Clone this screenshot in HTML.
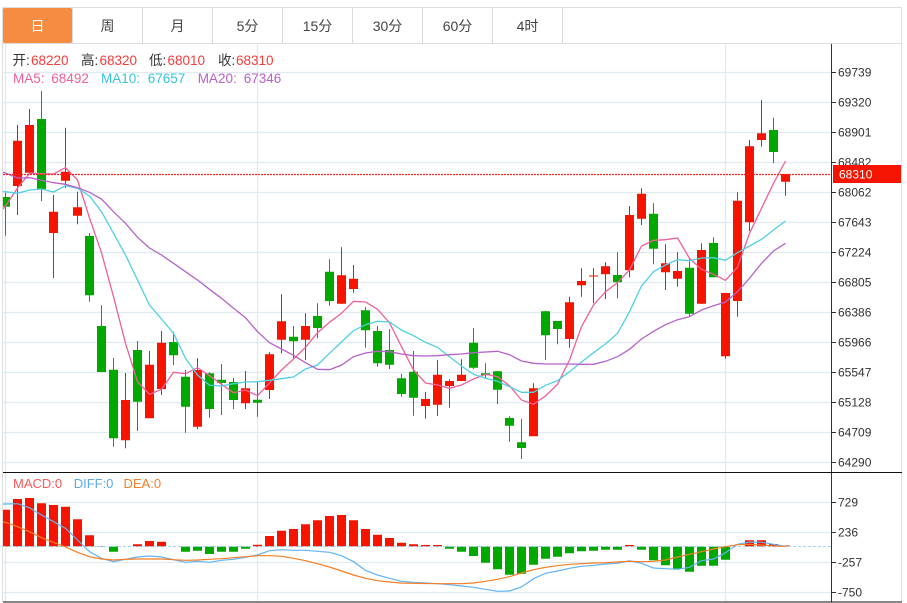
<!DOCTYPE html>
<html lang="zh">
<head>
<meta charset="utf-8">
<title>K线图</title>
<style>
html,body{margin:0;padding:0;background:#fff;width:907px;height:603px;overflow:hidden}
svg{display:block}
text{font-family:"Liberation Sans","Noto Sans CJK SC",sans-serif}
.tab{font-size:14px;fill:#444;text-anchor:middle}
.ax{font-size:12px;fill:#333}
.info{font-size:13.5px}
.m{font-size:13px}
</style>
</head>
<body>
<svg width="907" height="603" viewBox="0 0 907 603" xmlns="http://www.w3.org/2000/svg">
<defs><clipPath id="c"><rect x="3" y="44" width="828" height="558"/></clipPath></defs>
<rect width="907" height="603" fill="#fff"/>

<!-- tabs -->
<path d="M2.5 7.5H901.5V602M2.5 7.5V602M3 43.5H901" fill="none" stroke="#dedede"/>
<path d="M72.5 8V43M142.5 8V43M212.5 8V43M282.5 8V43M352.5 8V43M422.5 8V43M492.5 8V43M562.5 8V43" fill="none" stroke="#dadada"/>
<rect x="3" y="8" width="69" height="35" rx="1.5" fill="#f58c42"/>
<text class="tab" x="37.5" y="31" style="fill:#fff">日</text>
<text class="tab" x="107.5" y="31">周</text>
<text class="tab" x="177.5" y="31">月</text>
<text class="tab" x="247.5" y="31">5分</text>
<text class="tab" x="317.5" y="31">15分</text>
<text class="tab" x="387.5" y="31">30分</text>
<text class="tab" x="457.5" y="31">60分</text>
<text class="tab" x="527.5" y="31">4时</text>

<!-- grid -->
<path d="M3 72.5H831M3 102.5H831M3 132.5H831M3 162.5H831M3 192.5H831M3 222.5H831M3 252.5H831M3 282.5H831M3 312.5H831M3 342.5H831M3 372.5H831M3 402.5H831M3 432.5H831M3 462.5H831M3 502.5H831M3 532.5H831M3 562.5H831M3 592.5H831M5.5 44V602M257.5 44V602M725.5 44V602" fill="none" stroke="#dfeaf1" stroke-width="1.3"/>

<g clip-path="url(#c)">
<!-- wicks -->
<path fill="none" stroke="#f41400" d="M17.5 125V215M29.5 109V173M53.5 195V278M65.5 127.7V188M77.5 191.7V224.3M125.5 373V448.3M149.5 351V418M161.5 331V395M197.5 358.3V429M245.5 371V409M269.5 352.3V399M281.5 294.3V353.3M305.5 313.3V360M341.5 247.3V304M353.5 265V292.7M425.5 392V418.7M437.5 360V416M449.5 379.3V407.7M461.5 359.3V381M533.5 383.3V436M569.5 296.7V347.7M581.5 268.3V296.7M593.5 268.3V303.3M605.5 262.3V299M629.5 206V277.3M641.5 188.3V225M665.5 244.3V290M677.5 252.3V286.7M701.5 243.3V304M725.5 293V358.7M737.5 192.3V316.7M749.5 140V231M761.5 100V146.7M785.5 174V195.7"/>
<path fill="none" stroke="#00a800" d="M5.5 192.7V235.7M41.5 91V201M89.5 233V301.7M101.5 305.3V372M113.5 358V446.7M137.5 341V431M173.5 331.7V365M185.5 370V432.7M209.5 372.3V417.7M221.5 364V415M233.5 378V409M257.5 381.7V416.7M293.5 326V358.3M317.5 303.3V338.3M329.5 259.3V305.7M365.5 306.7V347.7M377.5 326V366.7M389.5 329V369M401.5 374V396.7M413.5 351V415.7M473.5 328V369M485.5 363.3V378.3M497.5 371V404M509.5 416.3V441.7M521.5 419V459M545.5 311V360M557.5 321V344.3M617.5 252.3V298.3M653.5 203.3V264.3M689.5 258.3V316.7M713.5 237.3V277.3M773.5 117.7V163.3"/>
<!-- red bodies -->
<path fill="#f41400" d="M13 140.7H22V186H13zM25 125H34V172.7H25zM49 211.7H58V233H49zM61 171.7H70V180.7H61zM73 207.3H82V215.7H73zM121 400H130V440.3H121zM145 364.7H154V418.3H145zM157 342.7H166V389H157zM193 370H202V426.7H193zM241 388.3H250V403.3H241zM265 354.3H274V390H265zM277 321.3H286V339.7H277zM301 326H310V339.7H301zM337 275.3H346V303.7H337zM349 278.7H358V289H349zM421 399H430V406H421zM433 374.7H442V404.7H433zM445 381H454V386H445zM457 374.7H466V381H457zM529 388.3H538V436.3H529zM565 302.3H574V339H565zM577 281H586V285.3H577zM589 275.5H598V276.5H589zM601 266.3H610V274.3H601zM625 215H634V270.3H625zM637 193.7H646V218.7H637zM661 263.3H670V272.3H661zM673 271H682V278.7H673zM697 250H706V303.7H697zM721 293H730V356.3H721zM733 200.7H742V301H733zM745 146.3H754V222.3H745zM757 133.3H766V140H757zM781 174H790V181.7H781z"/>
<!-- green bodies -->
<path fill="#00a800" d="M1 197H10V206.7H1zM37 119H46V189H37zM85 236H94V295.3H85zM97 326H106V372H97zM109 369.7H118V438.3H109zM133 350H142V401.7H133zM169 342H178V355.3H169zM181 376.7H190V406.7H181zM205 373.3H214V409H205zM217 379.7H226V383H217zM229 382H238V400H229zM253 399.7H262V402.7H253zM289 336.7H298V341.3H289zM313 316H322V328H313zM325 271.7H334V301H325zM361 310.3H370V330.3H361zM373 331H382V363.3H373zM385 350H394V364.7H385zM397 378.3H406V394H397zM409 371.7H418V397.7H409zM469 342.7H478V367.7H469zM481 373.3H490V375H481zM493 371.3H502V389.7H493zM505 418H514V425.7H505zM517 442.3H526V448H517zM541 311.3H550V335.3H541zM553 321H562V329H553zM613 275H622V282.3H613zM649 213.7H658V248.7H649zM685 267.7H694V313.7H685zM709 243H718V277.3H709zM769 130H778V152H769z"/>

<!-- MA lines -->
<polyline fill="none" stroke="#f0609a" stroke-width="1.3" points="3,209 5.5,206 17.5,188 29.5,173.3 41.5,173.7 53.5,174 65.5,167.7 77.5,180 89.5,218 101.5,252.7 113.5,296.7 125.5,343.3 137.5,381.7 149.5,394.3 161.5,389.3 173.5,372.3 185.5,373.7 197.5,367.7 209.5,375.7 221.5,384.3 233.5,392.7 245.5,390 257.5,395.7 269.5,383 281.5,370 293.5,359 305.5,347.3 317.5,332.7 329.5,322.3 341.5,313.3 353.5,301.3 365.5,302 377.5,309.3 389.5,322.7 401.5,346.7 413.5,370 425.5,383 437.5,385 449.5,388.3 461.5,385 473.5,379 485.5,374.3 497.5,376.7 509.5,385.7 521.5,400 533.5,404.3 545.5,396 557.5,384.3 569.5,360 581.5,326.7 593.5,305 605.5,291.7 617.5,282.7 629.5,270 641.5,246 653.5,240.3 665.5,239.7 677.5,238 689.5,258.3 701.5,269.3 713.5,274.3 725.5,280.3 737.5,267.3 749.5,233.3 761.5,208.3 773.5,183.3 785.5,161"/>
<polyline fill="none" stroke="#4fd0e4" stroke-width="1.3" points="3,191.5 5.5,191.7 17.5,193.3 29.5,190 41.5,189 53.5,192 65.5,185.7 77.5,188.3 89.5,196 101.5,211.7 113.5,233.3 125.5,255 137.5,280 149.5,305 161.5,319 173.5,333.3 185.5,358.3 197.5,375 209.5,385.3 221.5,386 233.5,383.7 245.5,382 257.5,381.7 269.5,380.3 281.5,378.7 293.5,377 305.5,369 317.5,365 329.5,353.3 341.5,342 353.5,330.7 365.5,324.7 377.5,321.3 389.5,322 401.5,330 413.5,335.7 425.5,342.3 437.5,347.3 449.5,356.7 461.5,366 473.5,374.3 485.5,378.3 497.5,381.3 509.5,386.7 521.5,392.3 533.5,392.3 545.5,385.3 557.5,380.7 569.5,371.7 581.5,362 593.5,352.7 605.5,344 617.5,333.3 629.5,311.7 641.5,286 653.5,271.7 665.5,265 677.5,259.7 689.5,260.7 701.5,258 713.5,257.7 725.5,260.3 737.5,252.7 749.5,246 761.5,239.3 773.5,230 785.5,221"/>
<polyline fill="none" stroke="#b662cb" stroke-width="1.3" points="3,172.3 5.5,173 17.5,178 29.5,177.7 41.5,180.3 53.5,182.7 65.5,184.3 77.5,187.7 89.5,192.3 101.5,199 113.5,211.7 125.5,223.3 137.5,237.3 149.5,248 161.5,255 173.5,263.3 185.5,271.7 197.5,280 209.5,289.3 221.5,298.3 233.5,308.3 245.5,317.7 257.5,331.7 269.5,342.7 281.5,349 293.5,355.3 305.5,362.7 317.5,369.3 329.5,369.7 341.5,365 353.5,356.7 365.5,353 377.5,351.3 389.5,351.7 401.5,354 413.5,355.7 425.5,356 437.5,355.7 449.5,354.7 461.5,354 473.5,352.7 485.5,352 497.5,351.3 509.5,354.7 521.5,361 533.5,363.3 545.5,364 557.5,364 569.5,364 581.5,364.3 593.5,364.3 605.5,361.3 617.5,356.7 629.5,349.3 641.5,339 653.5,331.3 665.5,324.7 677.5,319.7 689.5,316.7 701.5,310 713.5,305.7 725.5,302 737.5,291.7 749.5,278.3 761.5,263.3 773.5,251 785.5,243.3"/>

<!-- MACD bars -->
<path fill="#f41400" d="M1 509.7H10V546.5H1zM13 499H22V546.5H13zM25 498H34V546.5H25zM37 503.3H46V546.5H37zM49 505H58V546.5H49zM61 506.7H70V546.5H61zM73 519.3H82V546.5H73zM85 535.3H94V546.5H85zM133 544.3H142V546.5H133zM145 541H154V546.5H145zM157 541.7H166V546.5H157zM253 544.7H262V546.5H253zM265 536H274V546.5H265zM277 530.7H286V546.5H277zM289 529H298V546.5H289zM301 524.3H310V546.5H301zM313 520.3H322V546.5H313zM325 516H334V546.5H325zM337 515H346V546.5H337zM349 520.3H358V546.5H349zM361 529H370V546.5H361zM373 534.7H382V546.5H373zM385 538H394V546.5H385zM397 542.7H406V546.5H397zM409 544.3H418V546.5H409zM421 545H430V546.5H421zM433 545H442V546.5H433zM625 545H634V546.5H625zM745 540.3H754V546.5H745zM757 540.3H766V546.5H757zM769 544H778V546.5H769zM781 545.5H790V546.5H781z"/>
<path fill="#00a800" d="M97 546.5H106V547H97zM109 546.5H118V551.7H109zM181 546.5H190V551.7H181zM193 546.5H202V550.7H193zM205 546.5H214V554H205zM217 546.5H226V551.7H217zM229 546.5H238V551.7H229zM241 546.5H250V548.7H241zM445 546.5H454V548.7H445zM457 546.5H466V551.7H457zM469 546.5H478V556H469zM481 546.5H490V562.7H481zM493 546.5H502V569.3H493zM505 546.5H514V574.7H505zM517 546.5H526V573.7H517zM529 546.5H538V564.7H529zM541 546.5H550V558.7H541zM553 546.5H562V556.7H553zM565 546.5H574V553.3H565zM577 546.5H586V551.3H577zM589 546.5H598V550.7H589zM601 546.5H610V549.7H601zM613 546.5H622V549.7H613zM637 546.5H646V549.7H637zM649 546.5H658V560.3H649zM661 546.5H670V565.3H661zM673 546.5H682V568.7H673zM685 546.5H694V571.7H685zM697 546.5H706V565.7H697zM709 546.5H718V565.7H709zM721 546.5H730V559.7H721z"/>
<line x1="3" y1="546.5" x2="831" y2="546.5" stroke="#a5d6ec" stroke-dasharray="3 2"/>
<polyline fill="none" stroke="#62b3f5" stroke-width="1.2" points="3,504 5.5,504 17.5,503.7 29.5,507.7 41.5,515 53.5,521.7 65.5,528.3 77.5,540 89.5,551.7 101.5,558.3 113.5,561.7 125.5,559.3 137.5,557 149.5,556 161.5,557 173.5,559.7 185.5,562.3 197.5,561.3 209.5,562.3 221.5,560.3 233.5,559.3 245.5,557.3 257.5,555 269.5,550.7 281.5,549.7 293.5,550.3 305.5,550.3 317.5,551.3 329.5,552.3 341.5,555.7 353.5,561.7 365.5,570.3 377.5,575 389.5,578.3 401.5,581.3 413.5,582.3 425.5,583 437.5,583.7 449.5,584.7 461.5,586 473.5,587.3 485.5,589.3 497.5,591.3 509.5,591 521.5,587 533.5,578.7 545.5,573.3 557.5,571 569.5,568.3 581.5,566.3 593.5,565.3 605.5,564 617.5,563.3 629.5,560.7 641.5,563.3 653.5,568 665.5,568.7 677.5,569.3 689.5,567.3 701.5,560.7 713.5,559 725.5,552.7 737.5,544.3 749.5,542 761.5,542.3 773.5,544.3 785.5,546.3"/>
<polyline fill="none" stroke="#f57d22" stroke-width="1.2" points="3,522 5.5,522.3 17.5,526.7 29.5,531.7 41.5,537.7 53.5,542.3 65.5,547 77.5,552.3 89.5,556.7 101.5,559 113.5,560 125.5,559.3 137.5,559 149.5,559 161.5,559 173.5,559.7 185.5,560.3 197.5,560 209.5,559.3 221.5,558.7 233.5,557.7 245.5,556.7 257.5,555.7 269.5,555.7 281.5,556.3 293.5,558.3 305.5,560.7 317.5,563.7 329.5,567 341.5,571 353.5,575 365.5,578.3 377.5,580.7 389.5,582 401.5,583 413.5,583.3 425.5,583.5 437.5,583.7 449.5,583.7 461.5,583.7 473.5,583 485.5,581.3 497.5,579.3 509.5,576.7 521.5,573 533.5,569.7 545.5,567.3 557.5,565.7 569.5,564.3 581.5,563.7 593.5,563 605.5,562.7 617.5,562 629.5,561.3 641.5,561.7 653.5,561.3 665.5,560 677.5,557 689.5,554.3 701.5,551.7 713.5,549 725.5,546.7 737.5,544.7 749.5,544.3 761.5,545 773.5,546 785.5,546.3"/>

<!-- last price line -->
<line x1="3" y1="174.5" x2="831" y2="174.5" stroke="#ff2020" stroke-width="1.2" stroke-dasharray="2 1"/>
</g>

<!-- axes -->
<path d="M831.5 44V602" stroke="#333" fill="none"/>
<path d="M3 472.5H902M3 602H902" stroke="#111" fill="none"/>
<path d="M832 72.5h4M832 102.5h4M832 132.5h4M832 162.5h4M832 192.5h4M832 222.5h4M832 252.5h4M832 282.5h4M832 312.5h4M832 342.5h4M832 372.5h4M832 402.5h4M832 432.5h4M832 462.5h4M832 502.5h4M832 532.5h4M832 562.5h4M832 592.5h4" stroke="#333" fill="none"/>
<g class="ax">
<text class="ax" x="838" y="76.5">69739</text>
<text class="ax" x="838" y="106.5">69320</text>
<text class="ax" x="838" y="136.5">68901</text>
<text class="ax" x="838" y="166.5">68482</text>
<text class="ax" x="838" y="196.5">68062</text>
<text class="ax" x="838" y="226.5">67643</text>
<text class="ax" x="838" y="256.5">67224</text>
<text class="ax" x="838" y="286.5">66805</text>
<text class="ax" x="838" y="316.5">66386</text>
<text class="ax" x="838" y="346.5">65966</text>
<text class="ax" x="838" y="376.5">65547</text>
<text class="ax" x="838" y="406.5">65128</text>
<text class="ax" x="838" y="436.5">64709</text>
<text class="ax" x="838" y="466.5">64290</text>
<text class="ax" x="838" y="506.5">729</text>
<text class="ax" x="838" y="536.5">236</text>
<text class="ax" x="838" y="566.5">-257</text>
<text class="ax" x="838" y="596.5">-750</text>
</g>
<rect x="833" y="165" width="68" height="18" fill="#f41400"/>
<text class="ax" x="839" y="178.5" style="fill:#fff">68310</text>

<!-- info rows -->
<text class="info" x="12.5" y="65" fill="#333">开:</text><text class="info" x="31" y="65" fill="#fb3a3a">68220</text>
<text class="info" x="81" y="65" fill="#333">高:</text><text class="info" x="99.5" y="65" fill="#fb3a3a">68320</text>
<text class="info" x="149" y="65" fill="#333">低:</text><text class="info" x="167.5" y="65" fill="#fb3a3a">68010</text>
<text class="info" x="218" y="65" fill="#333">收:</text><text class="info" x="236" y="65" fill="#fb3a3a">68310</text>
<text class="info" x="13" y="83" fill="#f0609a">MA5:</text><text class="info" x="51.3" y="83" fill="#f0609a">68492</text>
<text class="info" x="101" y="83" fill="#36c5dc">MA10:</text><text class="info" x="147.7" y="83" fill="#36c5dc">67657</text>
<text class="info" x="197.7" y="83" fill="#b662cb">MA20:</text><text class="info" x="243.7" y="83" fill="#b662cb">67346</text>
<text class="m" x="13" y="488" fill="#fb5858">MACD:0</text>
<text class="m" x="73.7" y="488" fill="#5aa9ee">DIFF:0</text>
<text class="m" x="123.5" y="488" fill="#f57c29">DEA:0</text>
</svg>
</body>
</html>
